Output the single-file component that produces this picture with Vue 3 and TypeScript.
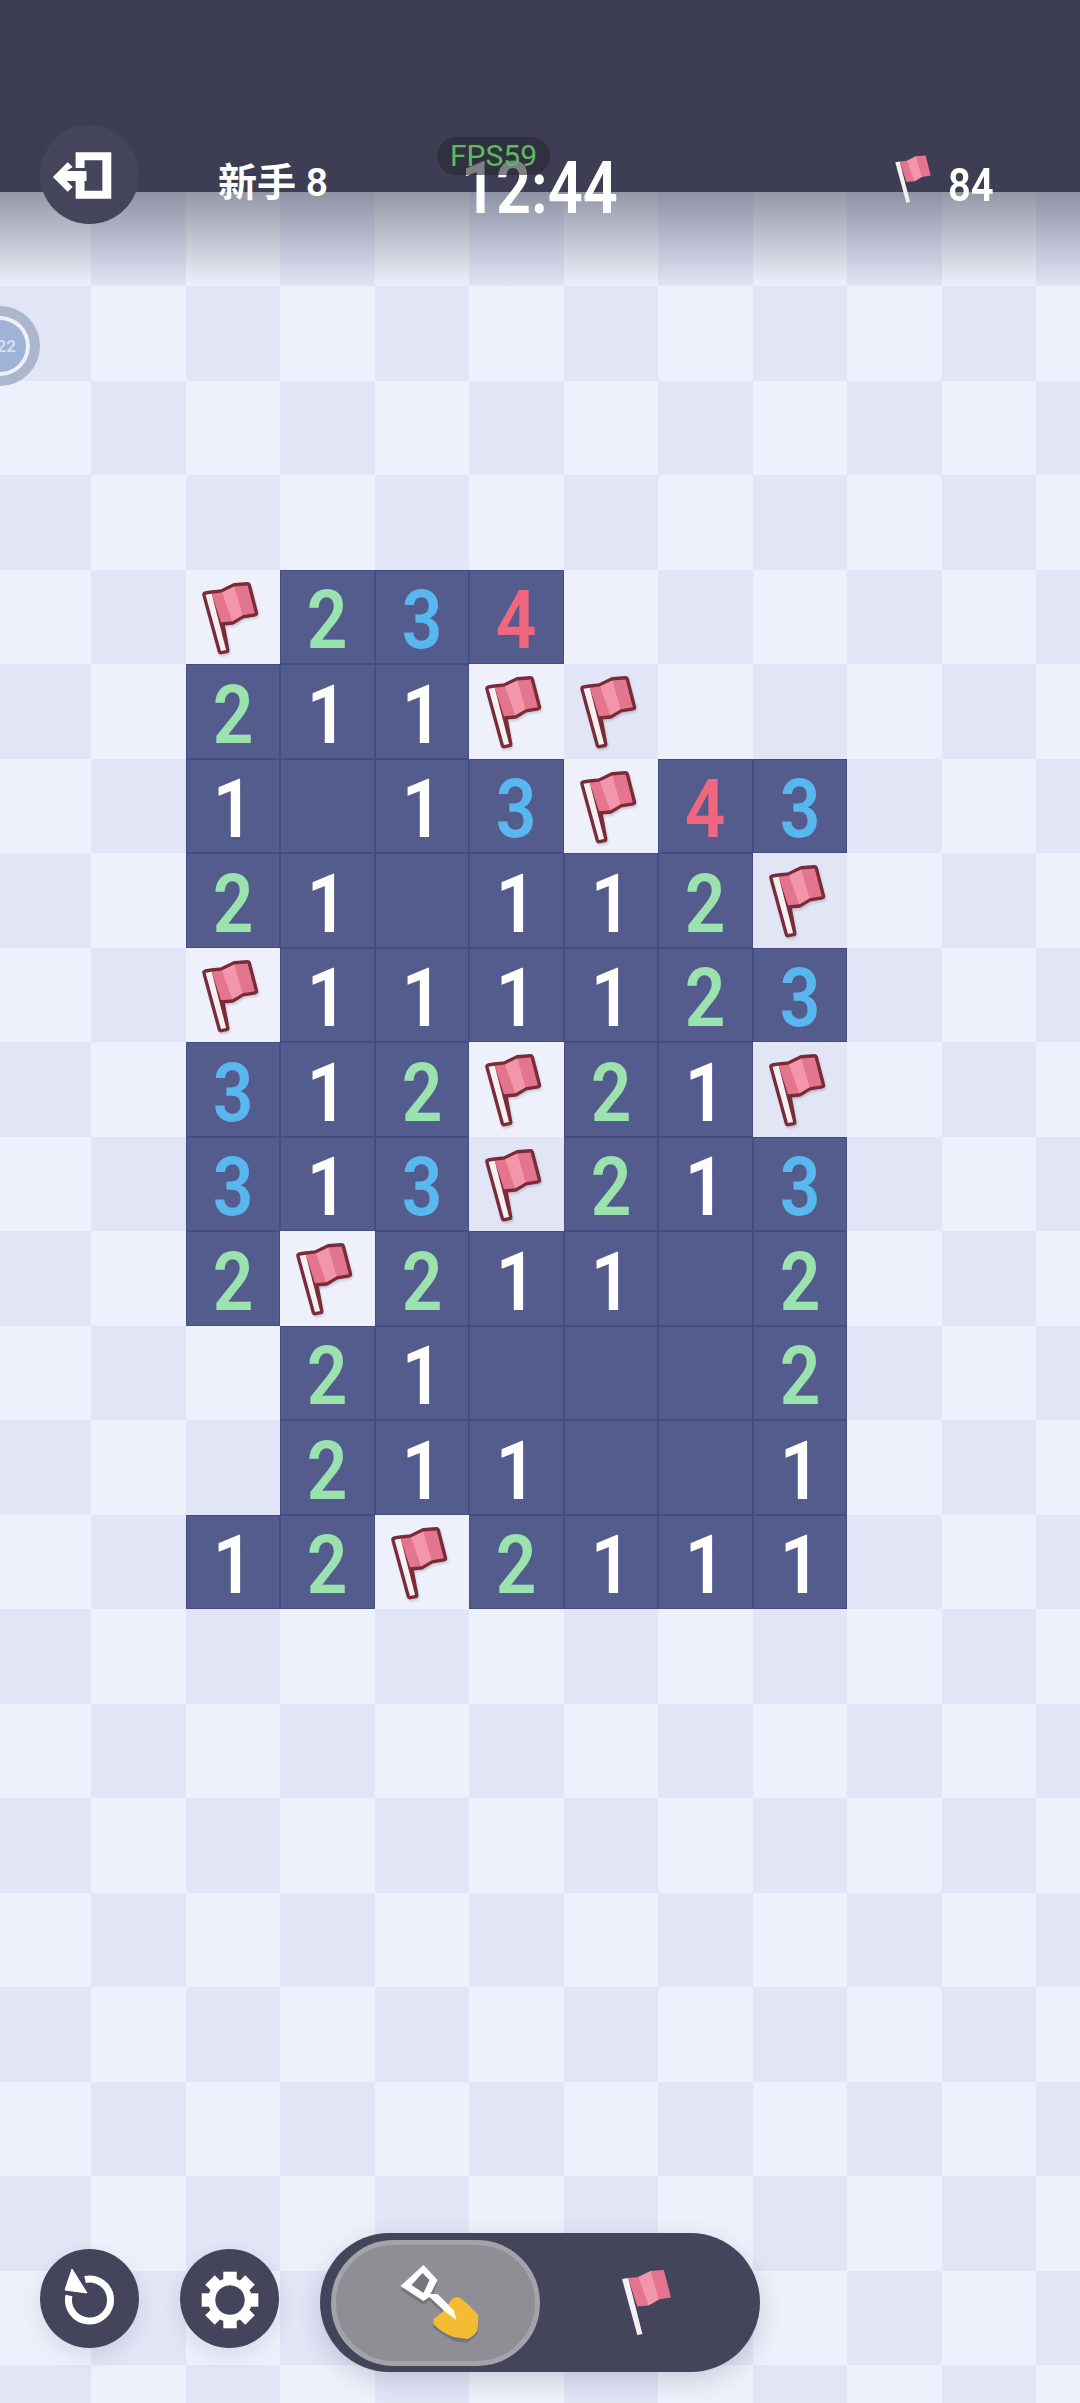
<script setup lang="ts">
// F = flag, 0 = opened and empty, H = still covered
const layout: Record<number, string> = {
  4: 'F234HHH',
  5: '211FFHH',
  6: '1013F43',
  7: '210112F',
  8: 'F111123',
  9: '312F21F',
  10: '313F213',
  11: '2F21102',
  12: 'H210002',
  13: 'H211001',
  14: '12F2111'
}

interface Cell {
  key: string
  kind: 'hidden' | 'open' | 'flag'
  shade: 'light' | 'dark'
  value: string
}

const cols = 12
const rows = 24
const firstOpenCol = 2

const cells: Cell[] = []
for (let r = 0; r < rows; r++) {
  const line = layout[r] ?? ''
  for (let c = 0; c < cols; c++) {
    const ch = line[c - firstOpenCol] ?? 'H'
    let kind: Cell['kind'] = 'open'
    if (ch === 'H') kind = 'hidden'
    if (ch === 'F') kind = 'flag'
    cells.push({
      key: `${r}-${c}`,
      kind,
      shade: (r + c) % 2 === 1 ? 'dark' : 'light',
      value: kind === 'open' && ch !== '0' ? ch : ''
    })
  }
}

const gearTeeth = [0, 45, 90, 135, 180, 225, 270, 315]
</script>

<template>
  <div class="game">
    <svg class="defs" width="0" height="0">
      <defs>
        <g id="flag-art">
          <path d="M33 23 43 22 55 16 68 15 75 42 63 44 53 50 42 51Z" fill="#e4758f" />
          <path d="M43 22 55 16 63 44 53 50Z" fill="#f296ab" />
          <path d="M27 24 33 23 47 78 42 79Z" fill="#f5f1f3" />
        </g>
        <path
          id="flag-line"
          d="M27 24 33 23 43 22 55 16 68 15 75 42 63 44 53 50 42 51 47 78 42 79Z"
          fill="#7a2b38"
          stroke="#7a2b38"
          stroke-width="6.5"
          stroke-linejoin="round"
        />
      </defs>
    </svg>

    <div class="board">
      <div
        v-for="cell in cells"
        :key="cell.key"
        class="cell"
        :class="[cell.kind, cell.shade, `n${cell.value}`]"
      >
        <span v-if="cell.value" class="digit">{{ cell.value }}</span>
        <svg v-if="cell.kind === 'flag'" class="cell-flag" viewBox="21.75 8.75 62 76">
          <use href="#flag-line" />
          <use href="#flag-art" />
        </svg>
      </div>
    </div>

    <div class="shade"></div>

    <header class="topbar">
      <button class="round">
        <svg viewBox="0 0 100 90" width="100" height="90">
          <path d="M36 38V22H72V69H36V51H45V61H63V30H45V38Z" fill="#fff" />
          <path d="M13 47 28 32 33 37 27 41H47V51H27L33 57 28 62Z" fill="#fff" />
        </svg>
      </button>
      <span class="level">新手 8</span>
      <div class="clock">
        <span class="time">12:44</span>
        <span class="fps">FPS59</span>
      </div>
      <div class="mines">
        <svg class="top-flag" viewBox="24 13 54 69">
          <use href="#flag-art" />
        </svg>
        <span class="mine-count">84</span>
      </div>
    </header>

    <div class="timer-badge">
      <span class="timer-text">22</span>
    </div>

    <footer class="toolbar">
      <button class="round">
        <svg viewBox="0 0 80 80" width="80" height="80">
          <path d="M35 20.5A21 21 0 1 1 19 36.5" fill="none" stroke="#fff" stroke-width="7" />
          <path d="M22 10 37 34 15 31Z" fill="#fff" stroke="#fff" stroke-width="1" />
        </svg>
      </button>
      <button class="round">
        <svg viewBox="0 0 80 80" width="80" height="80">
          <g fill="#fff">
            <circle cx="40" cy="41" r="22" />
            <rect
              v-for="a in gearTeeth"
              :key="a"
              x="33.3"
              y="12.7"
              width="13.4"
              height="12"
              :transform="`rotate(${a} 40 41)`"
            />
          </g>
          <circle cx="40" cy="41" r="14.7" fill="#44445a" />
        </svg>
      </button>
      <div class="mode-switch">
        <div class="mode active">
          <svg viewBox="0 0 100 100" width="100" height="100">
            <g transform="translate(4.5 -1)">
              <g fill="#76757c">
                <path d="M67 49 88 67 87 82 77 91 63 89 43 76 43 71 52 64 58 56Z" />
                <path d="M33 17 47 32 40 46 47 46 63 62 66 72 39 49 33 53 10 38Z" />
              </g>
              <path
                d="M67 45Q72 46 88 63L87 78Q84 84 77 87L63 85Q50 80 43 72L43 67 52 60 58 52Q62 45 67 45Z"
                fill="#f3bc32"
              />
              <path d="M33 13 47 28 40 42 47 42 63 58 66 68 55 60 39 45 33 49 10 34ZM32 21 21 33 33 41 39 28Z" fill="#fff" fill-rule="evenodd" />
            </g>
          </svg>
        </div>
        <div class="mode">
          <svg class="switch-flag" viewBox="24 13 54 69">
            <use href="#flag-art" />
          </svg>
        </div>
      </div>
    </footer>
  </div>
</template>

<style scoped>
.game {
  position: relative;
  width: 1080px;
  height: 2403px;
  overflow: hidden;
  background: #eef1fb;
  font-family: Roboto, "Noto Sans CJK SC", sans-serif;
}

.defs {
  position: absolute;
}

.board {
  display: grid;
  grid-template-columns: repeat(12, 94.5px);
  grid-auto-rows: 94.5px;
  margin-left: -3.5px;
  padding-top: 191.5px;
}

.cell {
  display: flex;
  align-items: center;
  justify-content: center;
  box-sizing: border-box;
}

.cell.light {
  background: #eef1fb;
}

.cell.dark {
  background: #e1e5f6;
}

.cell.open {
  background: #535c8c;
  box-shadow: inset 1px 1px 0 #434d83, inset -1px -1px 0 #434d83;
  color: #fff;
}

.cell.n2 {
  color: #9be3ae;
}

.cell.n3 {
  color: #58b7ee;
}

.cell.n4 {
  color: #f0667f;
}

.digit {
  margin-top: 8px;
  font-size: 81px;
  font-weight: 600;
  line-height: 1;
  transform: scaleX(0.88);
}

.cell-flag {
  width: 64px;
  height: 78px;
  margin: 2px 2px 0 0;
  filter: drop-shadow(1px 2px 1px rgba(60, 40, 60, 0.2));
}

.shade {
  position: absolute;
  top: 192px;
  left: 0;
  right: 0;
  height: 94px;
  background: linear-gradient(rgba(61, 62, 83, 0.5), rgba(61, 62, 83, 0));
}

.topbar {
  position: absolute;
  top: 0;
  left: 0;
  right: 0;
  height: 192px;
  box-sizing: border-box;
  display: flex;
  align-items: flex-start;
  padding: 125px 0 0 40px;
  background: #3d3e53;
  color: #fff;
}

.round {
  display: flex;
  align-items: center;
  justify-content: center;
  flex: none;
  width: 99px;
  height: 99px;
  padding: 0;
  border: 0;
  border-radius: 50%;
  background: #44445a;
}

.level {
  margin: 33px 0 0 79px;
  width: 250px;
  font-size: 39px;
  font-weight: 600;
  line-height: 50px;
}

.clock {
  position: relative;
  width: 425px;
  height: 99px;
}

.time {
  display: block;
  margin: 21px 0 0 -7px;
  transform: scaleX(0.84);
  transform-origin: left;
  font-size: 73px;
  font-weight: 600;
  line-height: 84px;
}

.fps {
  position: absolute;
  top: 12px;
  left: -31px;
  width: 113px;
  height: 38px;
  border-radius: 19px;
  background: rgba(40, 40, 50, 0.6);
  color: #5dbb5f;
  font-size: 30px;
  font-weight: 400;
  line-height: 38px;
  text-align: center;
}

.mines {
  display: flex;
  align-items: flex-start;
  gap: 15px;
  margin-top: 29px;
}

.top-flag {
  width: 40px;
  height: 51px;
}

.mine-count {
  margin-top: 4px;
  transform: scaleX(0.87);
  transform-origin: left;
  font-size: 46px;
  font-weight: 600;
  line-height: 54px;
}

.timer-badge {
  position: absolute;
  top: 306px;
  left: -40px;
  box-sizing: border-box;
  width: 80px;
  height: 80px;
  display: flex;
  align-items: center;
  justify-content: flex-end;
  padding-right: 14px;
  border: 10px solid rgba(180, 185, 200, 0.7);
  border-radius: 50%;
  background: #9fb2d8;
  box-shadow: inset 0 0 0 4px #eef1fb;
}

.timer-text {
  color: #d5dff0;
  font-size: 17px;
  font-weight: 700;
}

.toolbar {
  position: absolute;
  left: 40px;
  bottom: 31px;
  display: flex;
  align-items: flex-start;
  gap: 41px;
}

.toolbar .round {
  margin-top: 16px;
  box-shadow: 0 8px 20px rgba(60, 62, 90, 0.12);
}

.mode-switch {
  display: flex;
  align-items: center;
  width: 440px;
  height: 139px;
  box-sizing: border-box;
  padding-left: 11px;
  border-radius: 70px;
  background: #44445a;
  box-shadow: 0 8px 24px rgba(60, 62, 90, 0.2);
}

.mode {
  display: flex;
  align-items: center;
  justify-content: center;
  flex: 1;
}

.mode.active {
  flex: none;
  box-sizing: border-box;
  width: 209px;
  height: 126px;
  border: 5px solid #a3a3a9;
  border-radius: 63px;
  background: #8f8e94;
}

.switch-flag {
  width: 55px;
  height: 72px;
  margin-right: 8px;
}

button {
  cursor: pointer;
}
</style>
